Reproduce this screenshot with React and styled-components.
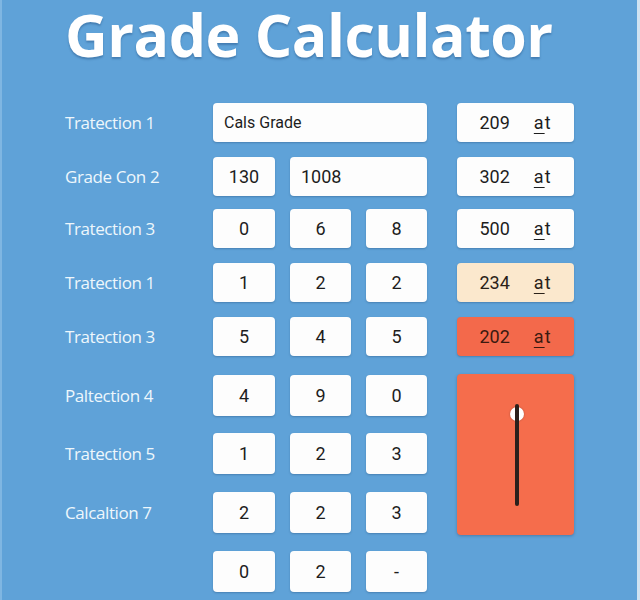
import React from "react";
import styled, { createGlobalStyle, css } from "styled-components";

const GlobalStyle = createGlobalStyle`
  html, body {
    margin: 0;
    padding: 0;
    background: #5fa2d8;
  }
  * {
    box-sizing: border-box;
  }
`;

const rows = [
  { label: "Tratection 1", cells: [{ text: "Cals Grade", span: 3, left: true }], result: { value: "209", tone: "plain" } },
  { label: "Grade Con 2", cells: [{ text: "130" }, { text: "1008", span: 2, left: true }], result: { value: "302", tone: "plain" } },
  { label: "Tratection 3", cells: [{ text: "0" }, { text: "6" }, { text: "8" }], result: { value: "500", tone: "plain" } },
  { label: "Tratection 1", cells: [{ text: "1" }, { text: "2" }, { text: "2" }], result: { value: "234", tone: "cream" } },
  { label: "Tratection 3", cells: [{ text: "5" }, { text: "4" }, { text: "5" }], result: { value: "202", tone: "hot" } },
  { label: "Paltection 4", tall: true, cells: [{ text: "4" }, { text: "9" }, { text: "0" }] },
  { label: "Tratection 5", tall: true, cells: [{ text: "1" }, { text: "2" }, { text: "3" }] },
  { label: "Calcaltion 7", tall: true, cells: [{ text: "2" }, { text: "2" }, { text: "3" }] },
  { label: "", tall: true, cells: [{ text: "0" }, { text: "2" }, { text: "-" }] },
];

const Page = styled.div`
  width: 640px;
  height: 600px;
  overflow: hidden;
  background: #5fa2d8;
  border-left: 2px solid #7fb6e2;
  border-right: 3px solid #cfe3f2;
  font-family: Roboto, "Liberation Sans", sans-serif;
`;

const Title = styled.h1`
  margin: 0;
  padding: 3px 0 0 63px;
  height: 103px;
  font-family: "Open Sans", "Noto Sans", sans-serif;
  font-weight: 700;
  font-size: 59px;
  line-height: 62px;
  letter-spacing: -0.5px;
  color: #ffffff;
  text-shadow: 0 2px 2px rgba(20, 60, 110, 0.35);
`;

const Board = styled.div`
  display: grid;
  grid-template-columns: 148px 244px 117px;
  grid-template-rows: 54px 52px 54px 54px 58px 58px 59px 59px 42px;
  padding-left: 63px;
`;

const Label = styled.div`
  grid-column: 1;
  grid-row: ${(p) => p.$row};
  height: ${(p) => (p.$tall ? 41 : 39)}px;
  display: flex;
  align-items: center;
  font-family: "Open Sans", "Noto Sans", sans-serif;
  font-size: 17px;
  letter-spacing: -0.4px;
  color: #eef7fc;
`;

const Inputs = styled.div`
  grid-column: 2;
  grid-row: ${(p) => p.$row};
  width: 214px;
  height: ${(p) => (p.$tall ? 41 : 39)}px;
  display: grid;
  grid-template-columns: 62px 61px 61px;
  column-gap: 15px;
`;

const boxLook = css`
  background: #fdfdfd;
  border-radius: 4px;
  box-shadow: 0 1px 2px rgba(30, 70, 110, 0.35);
`;

const Cell = styled.div`
  ${boxLook};
  grid-column: span ${(p) => p.$span || 1};
  display: flex;
  align-items: center;
  justify-content: ${(p) => (p.$left ? "flex-start" : "center")};
  padding-left: ${(p) => (p.$left ? "11px" : "0")};
  font-size: ${(p) => (p.$left && p.$span === 3 ? 16 : 18)}px;
  color: #1d1d1d;
`;

const tones = {
  plain: { bg: "#fdfdfd", fg: "#1d1d1d" },
  cream: { bg: "#fbe8cd", fg: "#2a2118" },
  hot: { bg: "#f3694b", fg: "#3b1a10" },
};

const Result = styled.div`
  ${boxLook};
  grid-column: 3;
  grid-row: ${(p) => p.$row};
  height: 39px;
  display: flex;
  align-items: center;
  justify-content: center;
  gap: 24px;
  font-size: 18px;
  background: ${(p) => tones[p.$tone].bg};
  color: ${(p) => tones[p.$tone].fg};
`;

const Unit = styled.span`
  font-size: 18px;
  letter-spacing: 1px;

  u {
    text-decoration-thickness: 1px;
    text-underline-offset: 4px;
  }
`;

const SliderPanel = styled.div`
  grid-column: 3;
  grid-row: 6 / span 3;
  margin-top: -1px;
  height: 161px;
  background: #f56d4c;
  border-radius: 4px;
  box-shadow: 0 1px 3px rgba(40, 50, 80, 0.35);
  display: flex;
  justify-content: center;
  padding: 30px 0 0 2px;
`;

const TrackWrap = styled.div`
  position: relative;
  z-index: 0;
`;

const Track = styled.div`
  width: 4px;
  height: 102px;
  border-radius: 2px;
  background: #2b201c;
`;

const Knob = styled.span`
  position: absolute;
  top: 3px;
  left: -5px;
  width: 14px;
  height: 14px;
  border-radius: 50%;
  background: #ffffff;
  z-index: -1;
  box-shadow: 0 0 2px rgba(0, 0, 0, 0.3);
`;

export default function App() {
  return (
    <Page>
      <GlobalStyle />
      <Title>Grade Calculator</Title>
      <Board>
        {rows.map((row, i) => (
          <React.Fragment key={i}>
            <Label $row={i + 1} $tall={row.tall}>
              {row.label}
            </Label>
            <Inputs $row={i + 1} $tall={row.tall}>
              {row.cells.map((cell, j) => (
                <Cell key={j} $span={cell.span} $left={cell.left}>
                  {cell.text}
                </Cell>
              ))}
            </Inputs>
            {row.result && (
              <Result $row={i + 1} $tone={row.result.tone}>
                <span>{row.result.value}</span>
                <Unit>
                  <u>a</u>t
                </Unit>
              </Result>
            )}
          </React.Fragment>
        ))}
        <SliderPanel>
          <TrackWrap>
            <Track />
            <Knob />
          </TrackWrap>
        </SliderPanel>
      </Board>
    </Page>
  );
}
